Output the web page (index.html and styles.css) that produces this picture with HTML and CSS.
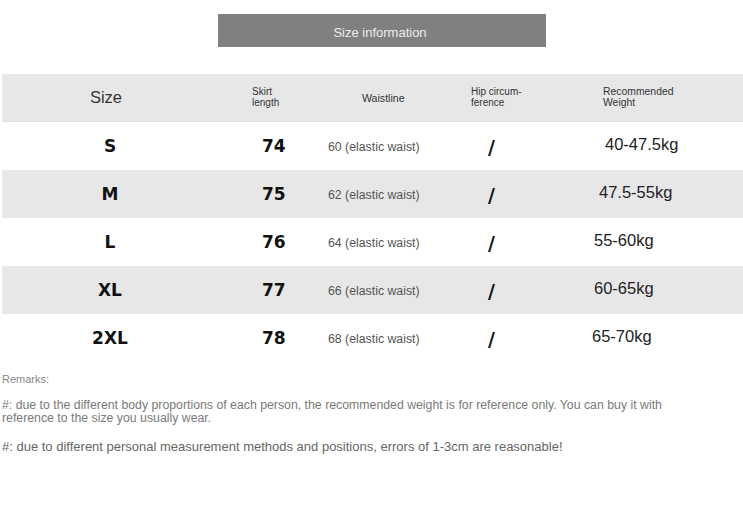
FILE: index.html
```html
<!DOCTYPE html>
<html>
<head>
<meta charset="utf-8">
<link rel="stylesheet" href="styles.css">
</head>
<body>
<div class="page">
  <div class="title-bar">Size information</div>
  <div class="table">
    <div class="row head">
      <div class="c c1 h-size">Size</div>
      <div class="c c2 h-small">Skirt<br>length</div>
      <div class="c c3 h-waist">Waistline</div>
      <div class="c c4 h-small">Hip circum-<br>ference</div>
      <div class="c c5 h-small h-weight">Recommended<br>Weight</div>
    </div>
    <div class="row">
      <div class="c c1 size">S</div>
      <div class="c c2 num">74</div>
      <div class="c c3 waist">60 (elastic waist)</div>
      <div class="c c4 slash">/</div>
      <div class="c c5 weight w1">40-47.5kg</div>
    </div>
    <div class="row alt">
      <div class="c c1 size">M</div>
      <div class="c c2 num">75</div>
      <div class="c c3 waist">62 (elastic waist)</div>
      <div class="c c4 slash">/</div>
      <div class="c c5 weight w2">47.5-55kg</div>
    </div>
    <div class="row">
      <div class="c c1 size">L</div>
      <div class="c c2 num">76</div>
      <div class="c c3 waist">64 (elastic waist)</div>
      <div class="c c4 slash">/</div>
      <div class="c c5 weight w3">55-60kg</div>
    </div>
    <div class="row alt">
      <div class="c c1 size">XL</div>
      <div class="c c2 num">77</div>
      <div class="c c3 waist">66 (elastic waist)</div>
      <div class="c c4 slash">/</div>
      <div class="c c5 weight w3">60-65kg</div>
    </div>
    <div class="row">
      <div class="c c1 size">2XL</div>
      <div class="c c2 num">78</div>
      <div class="c c3 waist">68 (elastic waist)</div>
      <div class="c c4 slash">/</div>
      <div class="c c5 weight w4">65-70kg</div>
    </div>
  </div>
  <div class="remarks">
    <p class="r-title">Remarks:</p>
    <p class="r-one">#: due to the different body proportions of each person, the recommended weight is for reference only. You can buy it with<br>reference to the size you usually wear.</p>
    <p class="r-two">#: due to different personal measurement methods and positions, errors of 1-3cm are reasonable!</p>
  </div>
</div>
</body>
</html>
```
FILE: styles.css
```css
html, body {
  margin: 0;
  padding: 0;
  background: #ffffff;
}
body {
  font-family: "Liberation Sans", Arial, sans-serif;
  color: #222;
}
.page {
  width: 743px;
  height: 522px;
  padding-top: 14px;
  box-sizing: border-box;
}
.title-bar {
  margin-left: 218px;
  width: 328px;
  height: 33px;
  background: #808080;
  color: #ededed;
  font-size: 13px;
  display: flex;
  align-items: center;
  justify-content: center;
  padding-top: 3px;
  padding-right: 4px;
  box-sizing: border-box;
}
.table {
  margin-top: 27px;
  margin-left: 2px;
}
.row {
  display: grid;
  grid-template-columns: 216px 100px 120px 130px 175px;
  height: 48px;
  align-items: center;
}
.row.head,
.row.alt {
  background: #e7e7e7;
}
.row.head {
  border-bottom: 1px solid #e0e0e0;
  height: 47px;
}
.c {
  white-space: nowrap;
}
.c1 {
  text-align: center;
}
.h-size {
  font-size: 16.5px;
  color: #333;
  padding-right: 8px;
}
.h-small {
  font-size: 10px;
  line-height: 10.5px;
  color: #333;
}
.c2.h-small { padding-left: 34px; }
.c4.h-small { padding-left: 33px; }
.h-weight {
  padding-left: 35px;
  font-size: 10.4px;
}
.h-waist {
  font-size: 10.6px;
  color: #333;
  padding-left: 44px;
}
.size {
  font-family: "DejaVu Sans", sans-serif;
  font-weight: bold;
  font-size: 17px;
  color: #111;
}
.num {
  font-family: "DejaVu Sans", sans-serif;
  font-weight: bold;
  font-size: 17px;
  color: #111;
  padding-left: 44px;
}
.waist {
  font-size: 12.3px;
  color: #555;
  padding-left: 10px;
  padding-top: 2px;
}
.slash {
  font-family: "DejaVu Sans", sans-serif;
  font-weight: bold;
  font-size: 19px;
  color: #111;
  padding-left: 50px;
  padding-top: 2px;
}
.weight {
  font-size: 16.5px;
  color: #222;
  padding-bottom: 3px;
}
.w1 { padding-left: 37px; }
.w2 { padding-left: 31px; }
.w3 { padding-left: 26px; }
.w4 { padding-left: 24px; }
.remarks {
  padding-left: 2px;
  padding-top: 10px;
}
.remarks p {
  margin: 0;
}
.r-title {
  font-size: 11px;
  color: #8a8a8a;
  line-height: 14px;
}
.r-one {
  margin-top: 13px !important;
  font-size: 12.3px;
  line-height: 13px;
  color: #7a7a7a;
}
.r-two {
  margin-top: 15px !important;
  font-size: 13px;
  line-height: 14px;
  color: #666;
}
```
